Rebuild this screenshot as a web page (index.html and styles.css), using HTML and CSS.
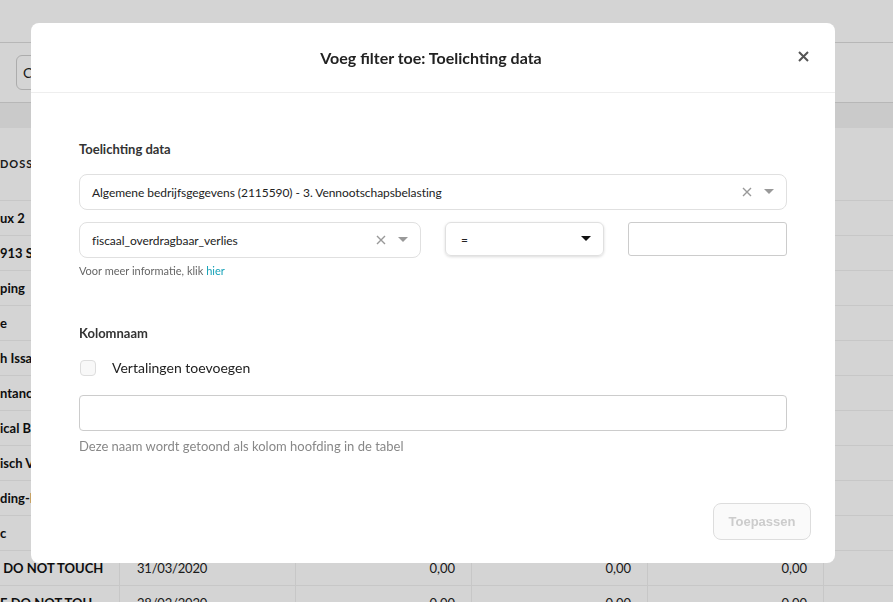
FILE: index.html
```html
<!DOCTYPE html>
<html lang="nl">
<head>
    <meta charset="UTF-8">
    <meta name="viewport" content="width=device-width, initial-scale=1.0">
    <title>Voeg filter toe</title>
    <link rel="stylesheet" href="styles.css">
</head>
<body>
    <!-- pagina achter de modal -->
    <div class="page">
        <div class="topbar"></div>
        <div class="toolbar">
            <span class="tool-btn">C</span>
        </div>
        <div class="band"></div>
        <div class="thead"><span>DOSS</span></div>
        <div class="rows">
            <div class="row"><span class="name">ux 2</span><span class="date"></span><span class="num"></span><span class="num"></span><span class="num"></span></div>
            <div class="row"><span class="name">913 Si</span><span class="date"></span><span class="num"></span><span class="num"></span><span class="num"></span></div>
            <div class="row"><span class="name">ping</span><span class="date"></span><span class="num"></span><span class="num"></span><span class="num"></span></div>
            <div class="row"><span class="name">e</span><span class="date"></span><span class="num"></span><span class="num"></span><span class="num"></span></div>
            <div class="row"><span class="name">h Issa</span><span class="date"></span><span class="num"></span><span class="num"></span><span class="num"></span></div>
            <div class="row"><span class="name">ntancy</span><span class="date"></span><span class="num"></span><span class="num"></span><span class="num"></span></div>
            <div class="row"><span class="name">ical Ba</span><span class="date"></span><span class="num"></span><span class="num"></span><span class="num"></span></div>
            <div class="row"><span class="name">isch V</span><span class="date"></span><span class="num"></span><span class="num"></span><span class="num"></span></div>
            <div class="row"><span class="name">ding-I</span><span class="date"></span><span class="num"></span><span class="num"></span><span class="num"></span></div>
            <div class="row"><span class="name">c</span><span class="date"></span><span class="num"></span><span class="num"></span><span class="num"></span></div>
            <div class="row"><span class="name">&nbsp;DO NOT TOUCH</span><span class="date">31/03/2020</span><span class="num">0,00</span><span class="num">0,00</span><span class="num">0,00</span></div>
            <div class="row"><span class="name">E DO NOT TOU</span><span class="date">28/02/2020</span><span class="num">0,00</span><span class="num">0,00</span><span class="num">0,00</span></div>
        </div>
    </div>

    <div class="overlay">
        <div class="modal">
            <div class="modal-header">
                <h3>Voeg filter toe: Toelichting data</h3>
                <span class="close">
                    <svg width="11" height="11" viewBox="0 0 11 11"><path d="M1 1L10 10M10 1L1 10" stroke="#555" stroke-width="2"/></svg>
                </span>
            </div>
            <div class="modal-body">
                <label class="lbl">Toelichting data</label>
                <div class="select">
                    <span class="value">Algemene bedrijfsgegevens (2115590) - 3. Vennootschapsbelasting</span>
                    <svg class="clear" width="10" height="10" viewBox="0 0 10 10"><path d="M1 1L9 9M9 1L1 9" stroke="#999" stroke-width="1.4"/></svg>
                    <svg class="caret" width="10" height="6" viewBox="0 0 10 6"><path d="M0 0H10L5 5Z" fill="#999"/></svg>
                </div>
                <div class="filter-row">
                    <div class="select">
                        <span class="value">fiscaal_overdragbaar_verlies</span>
                        <svg class="clear" width="10" height="10" viewBox="0 0 10 10"><path d="M1 1L9 9M9 1L1 9" stroke="#999" stroke-width="1.4"/></svg>
                        <svg class="caret" width="10" height="6" viewBox="0 0 10 6"><path d="M0 0H10L5 5Z" fill="#999"/></svg>
                    </div>
                    <div class="operator">
                        <span>=</span>
                        <svg width="10" height="6" viewBox="0 0 10 6"><path d="M0 0H10L5 5Z" fill="#111"/></svg>
                    </div>
                    <input type="text" class="value-input">
                </div>
                <p class="help small">Voor meer informatie, klik <a href="#">hier</a></p>

                <label class="lbl lbl2">Kolomnaam</label>
                <div class="check">
                    <span class="box"></span>
                    <span>Vertalingen toevoegen</span>
                </div>
                <input type="text" class="name-input">
                <p class="help">Deze naam wordt getoond als kolom hoofding in de tabel</p>
            </div>
            <div class="modal-footer">
                <button class="btn" disabled>Toepassen</button>
            </div>
        </div>
    </div>
</body>
</html>
```

FILE: styles.css
```css
*{
    margin: 0;
    padding: 0;
    box-sizing: border-box;
}
body{
    font-family: Lato, "Open Sans", sans-serif;
    background: #fff;
    color: #222;
    overflow: hidden;
}

/* achtergrond pagina */
.page{
    width: 893px;
    height: 602px;
}
.topbar{
    height: 43px;
    border-bottom: 1px solid #dcdcdc;
}
.toolbar{
    height: 60px;
    padding: 12px 16px;
    border-bottom: 1px solid #dcdcdc;
}
.tool-btn{
    display: inline-block;
    width: 60px;
    height: 35px;
    border: 1px solid #cfcfcf;
    border-radius: 6px;
    padding: 8px 6px;
    font-size: 14px;
    color: #222;
}
.band{
    height: 25px;
    background: #f3f3f3;
}
.thead{
    height: 73px;
    padding-top: 29px;
    font-size: 11px;
    font-weight: 700;
    letter-spacing: 1px;
    color: #222;
    border-bottom: 1px solid #f0f0f0;
}
.row{
    display: grid;
    grid-template-columns: 120px 176px 176px 176px 176px 69px;
    height: 35px;
    border-bottom: 1px solid #f0f0f0;
}
.row span{
    font-size: 13px;
    line-height: 34px;
    border-right: 1px solid #f0f0f0;
    white-space: nowrap;
    overflow: hidden;
}
.row .name{
    font-weight: 700;
    color: #111;
}
.row .date{
    padding-left: 17px;
    color: #222;
    letter-spacing: -0.2px;
}
.row .num{
    text-align: right;
    padding-right: 16px;
    color: #222;
}

/* modal */
.overlay{
    position: fixed;
    inset: 0;
    background: rgba(0, 0, 0, 0.17);
    padding: 23px 0 0 31px;
}
.modal{
    width: 804px;
    height: 540px;
    background: #fff;
    border-radius: 8px;
    display: flex;
    flex-direction: column;
}
.modal-header{
    height: 70px;
    border-bottom: 1px solid #eee;
    display: flex;
    align-items: center;
    justify-content: center;
    position: relative;
}
.modal-header h3{
    font-size: 16px;
    font-weight: 700;
    color: #222;
    margin-top: -1px;
    margin-right: 4px;
}
.close{
    position: absolute;
    right: 26px;
    top: 28px;
    line-height: 0;
}
.modal-body{
    flex: 1;
    padding: 48px 48px 0;
}
.lbl{
    display: block;
    font-size: 13px;
    font-weight: 700;
    color: #333;
    line-height: 16px;
    margin-bottom: 17px;
}
.lbl2{
    margin-bottom: 18px;
}
.select{
    height: 36px;
    border: 1px solid #e0e0e0;
    border-radius: 8px;
    display: flex;
    align-items: center;
    padding: 0 12px 0 12px;
}
.select .value{
    flex: 1;
    font-size: 12px;
    letter-spacing: -0.05px;
    color: #222;
}
.select .clear{
    margin-right: 12px;
}
.filter-row{
    display: grid;
    grid-template-columns: 342px 159px 159px;
    gap: 24px;
    margin-top: 12px;
    align-items: start;
}
.operator{
    height: 34px;
    border: 1px solid #e0e0e0;
    border-radius: 6px;
    box-shadow: 0 1px 3px rgba(0, 0, 0, 0.15);
    display: flex;
    align-items: center;
    justify-content: space-between;
    padding: 0 12px 0 15px;
    font-size: 12px;
}
.value-input{
    height: 34px;
    border: 1px solid #ccc;
    border-radius: 3px;
    width: 100%;
}
.help{
    font-size: 13px;
    color: #888;
    line-height: 16px;
    margin-top: 7px;
}
.help.small{
    font-size: 11px;
    color: #666;
    line-height: 14px;
    margin-top: 6px;
    margin-bottom: 47px;
}
.help a{
    color: #17a2b8;
    text-decoration: none;
}
.check{
    display: flex;
    align-items: center;
    gap: 16px;
    font-size: 14px;
    color: #222;
    margin-left: 1px;
}
.box{
    width: 16px;
    height: 16px;
    border: 1px solid #ddd;
    border-radius: 4px;
    background: #f8f8f8;
}
.name-input{
    display: block;
    width: 100%;
    height: 36px;
    border: 1px solid #ccc;
    border-radius: 4px;
    margin-top: 19px;
}
.modal-footer{
    display: flex;
    justify-content: flex-end;
    padding: 0 24px 23px;
}
.btn{
    width: 98px;
    height: 37px;
    font-family: "Liberation Sans", Arial, sans-serif;
    font-size: 13px;
    font-weight: 700;
    color: #ccc;
    background: #fafafa;
    border: 1px solid #ddd;
    border-radius: 8px;
}
```
